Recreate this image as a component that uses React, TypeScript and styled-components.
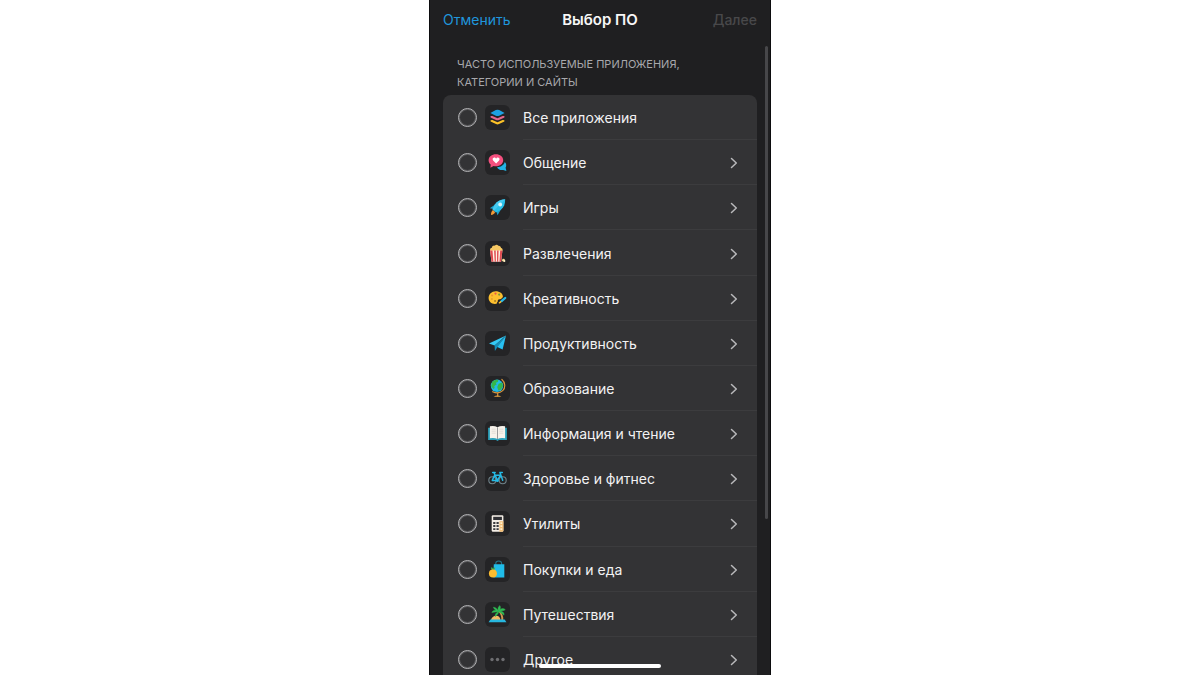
import React from "react";
import styled, { createGlobalStyle } from "styled-components";

const GlobalStyle = createGlobalStyle`
  * { box-sizing: border-box; }
  body {
    margin: 0;
    background: #fff;
    font-family: Inter, "Noto Sans", sans-serif;
  }
`;

const Page = styled.main`
  display: flex;
  justify-content: center;
  height: 100vh;
  overflow: hidden;
`;

const Phone = styled.section`
  position: relative;
  display: flex;
  flex-direction: column;
  width: 100%;
  max-width: 342px;
  padding: 0 13px;
  overflow: hidden;
  background: #1f1f21;
  border: solid #0c0c0e;
  border-width: 0 1px;
`;

const NavBar = styled.header`
  display: grid;
  grid-template-columns: 1fr auto 1fr;
  align-items: center;
  flex: none;
  height: 40px;
`;

const NavButton = styled.button<{ $end?: boolean }>`
  justify-self: ${(p) => (p.$end ? "end" : "start")};
  padding: 0;
  border: 0;
  background: none;
  color: #2096dc;
  font: 400 14px/20px Inter, "Noto Sans", sans-serif;
  cursor: pointer;

  &:disabled {
    color: #48484a;
    font-weight: 500;
    cursor: default;
  }
`;

const Title = styled.h1`
  margin: 0;
  color: #f7f7f7;
  font-size: 15px;
  font-weight: 600;
  line-height: 20px;
`;

const SectionTitle = styled.h2`
  flex: none;
  margin: 0;
  padding: 15px 14px 4px;
  color: #a8a8ac;
  font-size: 11px;
  font-weight: 400;
  line-height: 18px;
  text-transform: uppercase;
`;

const List = styled.ul`
  display: grid;
  grid-auto-rows: 1fr;
  flex: none;
  min-height: 587px;
  margin: 0;
  padding: 0;
  list-style: none;
  background: #333335;
  border-radius: 8px 8px 0 0;
`;

const Row = styled.li`
  display: flex;
  align-items: center;
  padding-left: 15px;
`;

const RowLabel = styled.label`
  display: flex;
  flex: 1;
  align-items: center;
  align-self: stretch;
  cursor: pointer;
`;

const Tick = styled.input`
  appearance: none;
  flex: none;
  width: 19px;
  height: 19px;
  margin: 0 8px 0 0;
  border: 1px solid #b4b4b6;
  border-radius: 50%;
  box-shadow: inset 0 0 0 1px #5c5c5e;

  &:checked { background: #2096dc; }
`;

const IconTile = styled.span`
  display: grid;
  place-items: center;
  flex: none;
  width: 25px;
  height: 25px;
  border-radius: 6px;
  background: #242426;
`;

const RowBody = styled.span<{ $line: boolean }>`
  display: flex;
  flex: 1;
  align-items: center;
  align-self: stretch;
  justify-content: space-between;
  margin-left: 13px;
  padding: 2px 19px 0 0;
  border-bottom: 1px solid ${(p) => (p.$line ? "#3c3c3e" : "transparent")};
  color: #f2f2f3;
  font-size: 14px;
  line-height: 20px;
`;

const ScrollThumb = styled.div`
  position: absolute;
  top: 46px;
  right: 2px;
  width: 3px;
  height: 70%;
  border-radius: 2px;
  background: #47474a;
`;

const HomeIndicator = styled.div`
  position: absolute;
  bottom: 7px;
  left: 50%;
  width: 122px;
  height: 4px;
  margin-left: -61px;
  border-radius: 2px;
  background: #fff;
`;

const Glyph = ({ children }: { children: React.ReactNode }) => (
  <svg width="25" height="25" viewBox="0 0 25 25" fill="none" aria-hidden="true">
    {children}
  </svg>
);

const Chevron = () => (
  <svg width="8" height="12" viewBox="0 0 8 12" fill="none" aria-hidden="true">
    <path d="M1.500 1.500 6.300 6 1.500 10.500" stroke="#b9b9bb" strokeWidth="1.500" strokeLinecap="round" strokeLinejoin="round" />
  </svg>
);

const Layers = (
  <Glyph>
    <path d="M5.400 8 10.800 5.100Q12.500 4.300 14.200 5.100L19.600 8 14.200 10.700Q12.500 11.400 10.800 10.700Z" fill="#1da1e2" />
    <path d="M5.600 11.100 7.400 10.900 12.500 13.200 17.600 10.900 19.400 11.100V12.400L14 15Q12.500 15.700 11 15L5.600 12.400Z" fill="#e5678c" />
    <path d="M5.600 15.200 7.400 15 12.500 17.300 17.600 15 19.400 15.200V16.500L14 19.100Q12.500 19.800 11 19.100L5.600 16.500Z" fill="#fcc228" />
  </Glyph>
);

const Chat = (
  <Glyph>
    <path d="M19.800 12c1.600 1.600 1.900 4 .8 5.700l.8 3.200-3.200-1c-2.600.6-5.200-.5-6.100-2.700 3.500-.1 6.700-1.900 7.700-5.200Z" fill="#21b3e4" />
    <path d="M10.900 4.300c4.200 0 7.300 2.500 7.300 5.900s-3.100 6-7.300 6c-.8 0-1.600-.1-2.300-.3L5.400 17.800 5.700 14.500C4.300 13.400 3.600 11.900 3.600 10.200 3.600 6.800 6.800 4.300 10.900 4.300Z" fill="#f4507f" />
    <path d="M11.100 13.600 8.100 10.500c-.9-1.100-.4-2.700 1-2.900.9-.1 1.600.4 2 1.200.4-.8 1.100-1.300 2-1.200 1.400.2 1.900 1.800 1 2.900Z" fill="#fff" />
  </Glyph>
);

const Rocket = (
  <Glyph>
    <path d="M8 15 10.100 17.100C9.700 19 8 19.700 6.100 20.100 5.900 18 6.400 16 8 15Z" fill="#f29a38" />
    <path d="M10.500 9.200 4.800 13.200 9.300 14ZM16.200 14 12.500 20.300 11.200 15.800Z" fill="#1aa5d3" />
    <path d="M20.200 4.300c-4.800.2-8 1.900-10.100 4.900L7.500 14.200 10.900 17.500 15.900 14.800C18.900 12.500 20.200 9.100 20.200 4.300Z" fill="#27c0ea" />
    <path d="M20.200 4.300 9 15.700 7.500 14.200 10.100 9.200C12.200 6.200 15.400 4.500 20.200 4.300Z" fill="#45caf0" />
    <circle cx="15.200" cy="9.500" r="1.900" fill="#d8f6fd" />
  </Glyph>
);

const Popcorn = (
  <Glyph>
    <path d="M5.300 10c-.8-1.800.2-3.300 1.600-3.300.2-1.700 1.600-2.500 2.900-2 .9-1.400 2.700-1.300 3.500.1 1.500-.2 2.600.8 2.700 2.200 1.400.1 2 1.400 1.400 3Z" fill="#f7c863" />
    <path d="M5.100 9.600H17.400L16.100 20.800H6.500Z" fill="#fff0e4" />
    <path d="M5.100 9.600H7.500L8.400 20.800H6.500ZM9.100 9.600H10.700L10.900 20.800H9.700ZM12.100 9.600H13.600L13.200 20.800H12ZM15.200 9.600H17.400L16.100 20.800H14.400Z" fill="#e04b50" />
    <circle cx="18.500" cy="19.200" r="1.400" fill="#f8dd99" />
    <circle cx="19.400" cy="19.900" r="1" fill="#fff3c8" />
  </Glyph>
);

const Palette = (
  <Glyph>
    <path d="M10.700 5.200c4.100 0 7.200 2.300 7.200 5.300 0 2.100-1.600 3-3.300 2.800-1.400 0-2 .8-1.800 2 .3 1.700-1 2.700-2.900 2.700-3.600 0-6.300-2.500-6.300-5.900 0-3.900 3-6.900 7.100-6.900Z" fill="#fdc02f" />
    <circle cx="7.100" cy="9.500" r="1.100" fill="#ef9530" />
    <circle cx="10.500" cy="7.600" r="1.100" fill="#e8574a" />
    <circle cx="14.200" cy="8.600" r="1.100" fill="#79983d" />
    <circle cx="6.900" cy="12.900" r="1" fill="#e5a02c" />
    <circle cx="10.100" cy="15" r="1.100" fill="#a87e28" />
    <path d="M14 17.200 20.400 11.700" stroke="#242426" strokeWidth="4" strokeLinecap="round" />
    <path d="M16.600 15.100 20.200 12" stroke="#27b9e8" strokeWidth="2.300" strokeLinecap="round" />
    <path d="M14.400 16.800 15.700 15.800" stroke="#fdc02f" strokeWidth="1.500" strokeLinecap="round" />
  </Glyph>
);

const Plane = (
  <Glyph>
    <path d="M21 4.500 4 12.400 9.600 14.600Z" fill="#35c9f4" />
    <path d="M21 4.500 9.600 14.600 9.900 20 12.500 16.100Z" fill="#148eb9" />
    <path d="M21 4.500 12.300 15.900 17.600 18.600Z" fill="#27bff0" />
  </Glyph>
);

const Globe = (
  <Glyph>
    <path d="M16.900 3.500C20.600 6.600 20.600 11.900 17.700 14.600 15.100 17 11.200 17.400 7.700 15.700M12.700 17V20" stroke="#d9973e" strokeWidth="1.200" strokeLinecap="round" />
    <path d="M8.600 20.700Q12.500 18.400 16.400 20.700Z" fill="#e5a242" />
    <circle cx="12" cy="9.800" r="6.200" fill="#20b9e6" />
    <path d="M7 6.200C8.800 3.800 12 3.400 13.400 4L12.800 6 10.800 6.800 11.600 8.500 9.300 9.900 9.600 12.100 8.500 13 6.100 10.200ZM13.700 7.800 17.200 6.600 18 10.300 15.700 13.700 13.400 14.500 12.200 11Z" fill="#36b64b" />
  </Glyph>
);

const Book = (
  <Glyph>
    <path d="M3.100 6.800h18.800v12.300H14L12.500 20 11 19.100H3.100Z" fill="#2a9fb9" />
    <path d="M4.900 5.300Q9.500 4.500 12.500 6.300 15.500 4.500 20.100 5.300V17.300Q15.500 16.500 12.500 18 9.500 16.500 4.900 17.300Z" fill="#f7f2eb" />
    <path d="M12.500 6.300V18" stroke="#99999a" strokeWidth="1" />
    <path d="M6.700 8.200h4M6.700 10.200h4M6.700 12.200h4M14.300 8.200h4M14.300 10.200h4M14.300 12.200h4" stroke="#d4cec8" strokeWidth=".6" />
  </Glyph>
);

const Bike = (
  <Glyph>
    <circle cx="7.300" cy="14.300" r="3.500" stroke="#6f8289" strokeWidth="1.100" />
    <circle cx="17.700" cy="14.300" r="3.500" stroke="#6f8289" strokeWidth="1.100" />
    <path d="M7.300 14.300 9.600 9.200H15.600L12.400 14.400H7.300M12.400 14.400 9 6.700M17.700 14.300 14.900 6.500H17.300M7.700 6.600H10.200" stroke="#25bae5" strokeWidth="1.500" strokeLinecap="round" strokeLinejoin="round" />
    <circle cx="12.400" cy="14.500" r="1.500" fill="#25bae5" />
  </Glyph>
);

const Calculator = (
  <Glyph>
    <rect x="6.700" y="4.200" width="11.700" height="16.500" rx="1.200" fill="#f3ede5" />
    <rect x="8.200" y="5.800" width="8.700" height="3.200" fill="#303034" />
    <path d="M14.500 10.200H18.400V19.500Q18.400 20.700 17.200 20.700H14.500Z" fill="#f2bd75" />
    <path d="M8.200 11h2.200v1.900H8.200zM11.500 11h2.200v1.900h-2.200zM8.200 14.100h2.200V16H8.200zM11.500 14.100h2.200V16h-2.200zM8.200 17.200h2.200v1.900H8.200zM11.500 17.200h2.200v1.900h-2.200z" fill="#3a3a3d" />
    <path d="M15.400 11.200h1.800v1.700h-1.800zM15.400 14.200h1.800v1.700h-1.800zM15.400 17.200h1.800v1.700h-1.800z" fill="#fff0cf" />
  </Glyph>
);

const Shopping = (
  <Glyph>
    <path d="M10.800 8V6.200Q10.900 4 13.700 4T16.600 6.200V8" stroke="#28758b" strokeWidth="1.100" />
    <path d="M8.800 7.200H19.300V20.400H8.400Z" fill="#20bce9" />
    <path d="M7.900 13.600C6.200 12.700 5.700 11.200 6.400 10.300 7.600 10.600 8.300 11.600 8.100 12.900 8.300 11.300 9.200 10.500 10.200 10.300 10.400 12 9.500 13.200 7.900 13.600Z" fill="#45ad50" />
    <circle cx="7.900" cy="16.500" r="4" fill="#fdbd2e" />
  </Glyph>
);

const Palm = (
  <Glyph>
    <path d="M5.900 18.200C6.600 15.200 8.700 13.600 11.300 13.700 13.800 13.800 15.300 15.500 15.600 18.200Z" fill="#f3bb65" />
    <path d="M18.300 18.300C18.600 14.400 17.300 11.200 14.600 9L13.700 9.700C15.800 12.300 16.600 15.200 16.300 18.300Z" fill="#d3994f" />
    <path d="M13.900 9.500C10.700 7.400 7.700 8.500 6.800 10.600 9.800 9.800 12.100 10 13.900 9.500 10.800 10.600 9.700 12.900 10.200 14.800 12 12.900 13.400 11.800 13.900 9.500 15.400 11.300 17.900 11.600 19 13.200 19.600 10.600 17.100 8.800 13.900 9.500 16.600 8.500 18.600 9 20.300 7.700 18.200 5.600 15.100 6.300 13.900 9.500 15.700 7.200 15.800 5.100 14.900 3.500 12.800 5 12.300 7.200 13.900 9.500 12.300 6.700 10.100 5 8.300 5.300 8.900 7.300 11.200 8.800 13.900 9.500Z" fill="#2fba53" stroke="#2fba53" strokeWidth=".4" />
    <path d="M5.300 17.600H19.700L21.400 20.200H3.600Z" fill="#27b7df" />
  </Glyph>
);

const Dots = (
  <Glyph>
    <g fill="#6e6e71">
      <circle cx="7" cy="12.500" r="1.700" />
      <circle cx="12.500" cy="12.500" r="1.700" />
      <circle cx="18" cy="12.500" r="1.700" />
    </g>
  </Glyph>
);

const categories = [
  { name: "Все приложения", icon: Layers, leaf: true },
  { name: "Общение", icon: Chat },
  { name: "Игры", icon: Rocket },
  { name: "Развлечения", icon: Popcorn },
  { name: "Креативность", icon: Palette },
  { name: "Продуктивность", icon: Plane },
  { name: "Образование", icon: Globe },
  { name: "Информация и чтение", icon: Book },
  { name: "Здоровье и фитнес", icon: Bike },
  { name: "Утилиты", icon: Calculator },
  { name: "Покупки и еда", icon: Shopping },
  { name: "Путешествия", icon: Palm },
  { name: "Другое", icon: Dots },
];

export default function App() {
  return (
    <Page>
      <GlobalStyle />
      <Phone>
        <NavBar>
          <NavButton type="button">Отменить</NavButton>
          <Title>Выбор ПО</Title>
          <NavButton type="button" $end disabled>Далее</NavButton>
        </NavBar>
        <SectionTitle>
          Часто используемые приложения,
          <br />
          категории и сайты
        </SectionTitle>
        <List>
          {categories.map(({ name, icon, leaf }, i) => (
            <Row key={name}>
              <RowLabel>
                <Tick type="checkbox" />
                <IconTile>{icon}</IconTile>
                <RowBody $line={i < categories.length - 1}>
                  {name}
                  {!leaf && <Chevron />}
                </RowBody>
              </RowLabel>
            </Row>
          ))}
        </List>
        <ScrollThumb />
        <HomeIndicator />
      </Phone>
    </Page>
  );
}
